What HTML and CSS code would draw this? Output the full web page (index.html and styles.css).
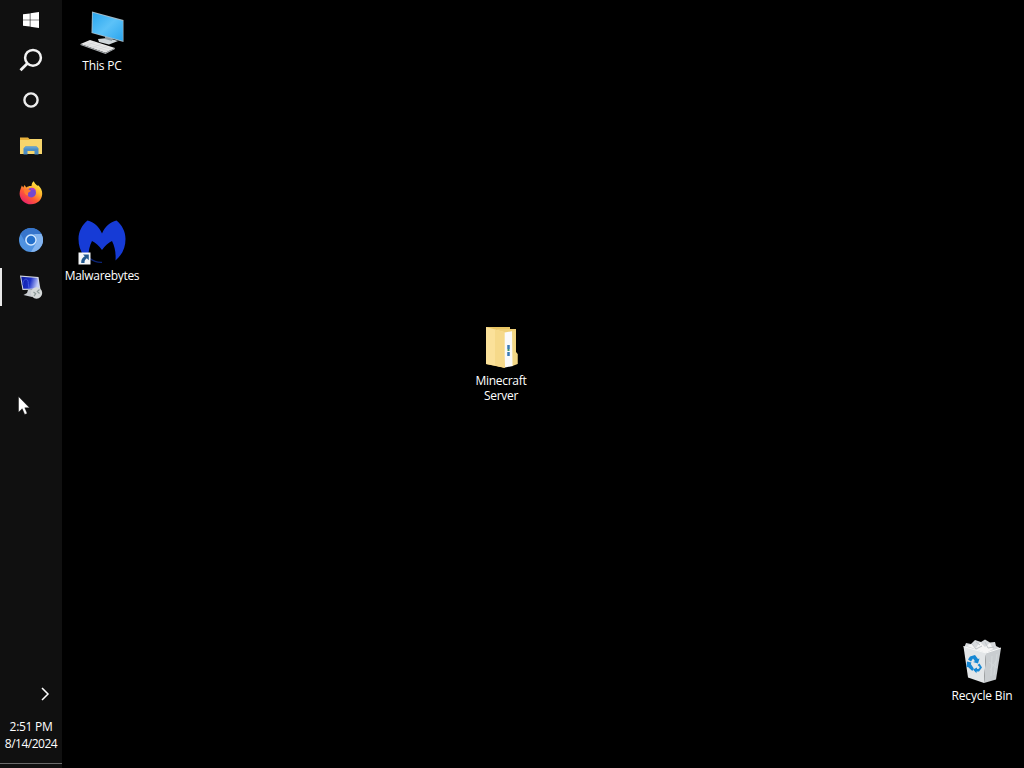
FILE: index.html
```
<!DOCTYPE html>
<html lang="en">
<head>
    <meta charset="utf-8">
    <title>Desktop</title>
    <meta name="viewport" content="width=device-width, initial-scale=1.0">
    <link rel="stylesheet" href="styles.css">
</head>
<body>
    <nav class="taskbar">
        <div class="system-buttons">
            <a class="task-button">
                <svg width="16" height="16" viewBox="0 0 16 16" fill="#fff">
                    <path d="M0 2.3l6.800-.9v6.300H0zM7.400 1.200L16 0v7.700H7.400zM0 8.300h6.800v6.300L0 13.700zM7.400 8.300H16V16l-8.600-1.200z"/>
                </svg>
            </a>
            <a class="task-button">
                <svg width="24" height="24" viewBox="0 0 24 24" fill="none" stroke="#f2f2f2" stroke-width="2.500">
                    <circle cx="14" cy="9.800" r="7.900"/>
                    <path d="M8.300 15.500L1.500 22.300" stroke-width="2.800"/>
                </svg>
            </a>
            <a class="task-button">
                <svg width="16" height="16" viewBox="0 0 16 16" fill="none" stroke="#ececec" stroke-width="2.400">
                    <circle cx="8" cy="8" r="6.600"/>
                </svg>
            </a>
        </div>

        <div class="apps">
            <a class="app-button">
                <svg width="24" height="24" viewBox="0 0 24 24">
                    <path d="M1 3.500h8l1.500 1.500H23v15H1z" fill="#e9b23c"/>
                    <path d="M1 6h9l1.500-1H23v15H1z" fill="#f6d56c"/>
                    <path d="M4.500 20.500v-6l2-2h11l2 2v6h-4V17h-7v3.500z" fill="#4a8cc4"/>
                    <path d="M6.500 12.500h11l2 2h-15z" fill="#5f9fd2"/>
                </svg>
            </a>
            <a class="app-button">
                <svg width="24" height="24" viewBox="0 0 24 24">
                    <defs>
                        <linearGradient id="fox" x1=".85" y1=".05" x2=".2" y2=".95">
                            <stop offset="0" stop-color="#fff04a"/>
                            <stop offset=".35" stop-color="#ffb32c"/>
                            <stop offset=".65" stop-color="#ff5a35"/>
                            <stop offset="1" stop-color="#e8206c"/>
                        </linearGradient>
                    </defs>
                    <path d="M12.500 5C12.600 2.800 13.500 1 14.800.2c.6 2 2.200 3.100 3.600 4.600l.8-.5C21.500 6.500 23.500 9.500 23.200 13c-.4 6-5 10.300-11.200 10.300S.7 18.500.6 12.700C.6 9.500 2 7.500 2.800 4.500l1.500 2L5.500 4l1.800 2.500C8.800 5.300 10.500 4.800 12.500 5z" fill="url(#fox)"/>
                    <circle cx="12.300" cy="11.800" r="4.700" fill="#7548cf"/>
                    <path d="M5 9c2-1.500 4.500-1 6 .3l1 .5c-.3 1-2 1.200-2.800 2-.5.800.3 2.100-.2 2.800C6.500 14.500 5 12 5 9z" fill="#ff7c30"/>
                    <path d="M12 6.800c2.500-.5 4.800 1.200 5.200 3.600-1.400-1.500-3.100-2-5.200-1.400z" fill="#b438c7"/>
                </svg>
            </a>
            <a class="app-button">
                <svg width="24" height="24" viewBox="0 0 24 24">
                    <circle cx="12" cy="12" r="12" fill="#4f92e0"/>
                    <path d="M1.600 6A12 12 0 0 1 22.400 6H12a6 6 0 0 0-5.200 9z" fill="#3775cb"/>
                    <path d="M22.400 6A12 12 0 0 1 12 24l5.200-9a6 6 0 0 0-.9-7.200L15 6z" fill="#83b4ef"/>
                    <circle cx="12" cy="12" r="5.800" fill="#d3e8ff"/>
                    <circle cx="12" cy="12" r="4.300" fill="#2470cb"/>
                </svg>
            </a>
            <a class="app-button active">
                <svg width="24" height="24" viewBox="0 0 24 24">
                    <defs>
                        <linearGradient id="rdp" x1="0" y1="0" x2="1" y2=".2">
                            <stop offset="0" stop-color="#0d1c9c"/>
                            <stop offset=".55" stop-color="#1b2fc8"/>
                            <stop offset="1" stop-color="#c3ccfa"/>
                        </linearGradient>
                    </defs>
                    <path d="M1 .5L19.500 2l2 12.500L3.500 15z" fill="#d3d7e2"/>
                    <path d="M2.200 1.700L18.500 3l1.800 10.500-16 .3z" fill="url(#rdp)"/>
                    <path d="M3.800 10c.2-5.500 3.200-7 4.700-5 1.300 2 .5 5 1.500 8.500" fill="none" stroke="#4159dd"/>
                    <path d="M9 15h6v3l-2 4-8.500-2 3.500-2z" fill="#c8ccd0"/>
                    <circle cx="17.500" cy="18" r="5.700" fill="#d5d9d9"/>
                    <path d="M14.500 17l2.200 1.700-1.700 2.500M20.500 14.500l-2.200 2 2.200 2" fill="none" stroke="#8f9c9a" stroke-width="1.200"/>
                </svg>
            </a>
        </div>

        <div class="tray">
            <svg class="chevron" width="10" height="14" viewBox="0 0 10 14" fill="none" stroke="#fff" stroke-width="1.500">
                <path d="M2 1l6 6-6 6"/>
            </svg>
            <div class="clock">
                <div class="time">2:51 PM</div>
                <div class="date">8/14/2024</div>
            </div>
            <div class="show-desktop"></div>
        </div>
    </nav>

    <main class="desktop">
        <div class="shortcut this-pc">
            <svg width="48" height="48" viewBox="0 0 48 48">
                <defs>
                    <linearGradient id="screen" x1="0" y1="0" x2="1" y2="1">
                        <stop offset="0" stop-color="#29a6ee"/>
                        <stop offset=".5" stop-color="#5cc2f8"/>
                        <stop offset="1" stop-color="#2aa5ee"/>
                    </linearGradient>
                </defs>
                <path d="M20 31l10-1 10 3-9 3.500-10-2.500z" fill="#cfd6da"/>
                <path d="M27 26l7 2v5l-7-2z" fill="#8f9a9f"/>
                <path d="M14 3.500l31.500 8.500v22L13.500 25z" fill="#9fb9c8"/>
                <path d="M14.800 4.800l30 8.200v19.800l-30.300-8.400z" fill="url(#screen)"/>
                <path d="M2.500 36l9.500-4 25 8-9.500 4.700z" fill="#e8e8e8"/>
                <path d="M2.500 36l25 8.700 9.500-4.700v1l-9.500 4.900-25-8.800z" fill="#a9adb0"/>
                <path d="M6 36l25 7M9 34.500l25 7M8 38l9-4M14 40l9-4M20 42l9-4" stroke="#cfd2d3" stroke-width=".6"/>
            </svg>
            <span class="label">This PC</span>
        </div>

        <div class="shortcut malwarebytes">
            <svg width="48" height="48" viewBox="0 0 48 48">
                <path d="M9.500 2.500C16 4 21 8.500 24 15.500 27 8.500 32 4 38.500 2.500c5.500 4.500 9 11 9 18.500 0 8.500-3 15.500-10 21.500.500-7-.500-13.500-3.500-19.500-3.500 1.500-7 5-10 9-3-4-6.500-7.500-10-9-3 6-4 12.500-3.500 19.500C3.500 36.500.5 29.500.5 21 .5 13.500 4 7 9.500 2.500z" fill="#163bd6"/>
                <path d="M12 40.500c3 2.500 7 4 12 3.800" fill="none" stroke="#0b2477" stroke-width="1.300"/>
                <path d="M.5 34.500h12v12H.5z" fill="#f5f7f9"/>
                <path d="M5 36.500h5.800v5.800l-2-2c-1.700 1.200-2.400 2.500-2.300 4.700H3.200c-.2-3 1-5.200 3.600-6.700z" fill="#22598f"/>
            </svg>
            <span class="label">Malwarebytes</span>
        </div>

        <div class="shortcut minecraft">
            <svg width="48" height="48" viewBox="0 0 48 48">
                <path d="M9 4h24v25h-5v16L9 41z" fill="#e9c564"/>
                <path d="M20 6h19v23l1.500 2v10L29 42z" fill="#f0d078"/>
                <path d="M25 10l11-2v35l-8 1.500z" fill="#fafafa"/>
                <path d="M35 8l3.500-.5V29l2 2v10l-5 2z" fill="#f1d685"/>
                <path d="M31.500 22v4M31.500 29v4" stroke="#397ab5" stroke-width="2.500"/>
                <path d="M31.500 26v2" stroke="#3f9368" stroke-width="2"/>
                <path d="M9 4l18.500 5v35.500L9 41z" fill="#fbe19a"/>
                <path d="M18 6.500l9.500 2.700v35.500L18 42.500z" fill="#f6d98a"/>
            </svg>
            <span class="label">Minecraft Server</span>
        </div>

        <div class="shortcut recycle-bin">
            <svg width="48" height="48" viewBox="0 0 48 48">
                <path d="M6 10l2-5 5 1 4-4 6 2 4-2.500 5 3 5-.5 1 4 4 2-4 5-14 3z" fill="#d7dadd"/>
                <path d="M9 8l5-2 4 4 4-6 5 5 5-4 3 6-7 4z" fill="#f6f6f6"/>
                <path d="M14 6l4 5 6-3M27 4l3 6 6-1M18 4l4 3" fill="none" stroke="#c0c5c8"/>
                <path d="M5.500 8.500L28 15l-2 30-16-5.500z" fill="#e3e6e8"/>
                <path d="M28 15l15-5-5 31.500L26 45z" fill="#c9cdd0"/>
                <path d="M5.500 8.500L28 15l15-5" fill="none" stroke="#f7f8f8"/>
                <path d="M34 18l-1 20M39 16l-3 21M31 24l8 6M32 32l6-9" stroke="#d6dadc" stroke-width=".8"/>
                <g fill="#1688d4">
                    <path d="M12 18.500l5-1.500 3 4 1.500-.5-1.500 5-5-1.500 2-.8-2-2.700-2 3-3-2z"/>
                    <path d="M9 23.500l4.500 1-.7 1.500 3 4.500-1.500 2.500-4.300-4-1.500.3z"/>
                    <path d="M21.500 25.500l2.500 4-3 4h-2.500v1.800L15 31.500l4-2v1.500l2-.3.700-1.700-2.200-2z"/>
                </g>
            </svg>
            <span class="label">Recycle Bin</span>
        </div>
    </main>

    <svg class="cursor" width="12" height="19" viewBox="0 0 12 19">
        <path d="M.5.500v15.800l3.700-3.600 2.500 5.800 2.500-1.100-2.400-5.600h4.700z" fill="#fff" stroke="#000" stroke-width=".4"/>
    </svg>
</body>
</html>
```
FILE: styles.css
```
body {
    margin: 0;
    height: 100vh;
    display: flex;
    overflow: hidden;
    background: #000;
    color: #fff;
    font-family: "Open Sans", "Noto Sans", sans-serif;
    font-size: 12px;
}

svg {
    display: block;
}

.taskbar {
    width: 62px;
    height: 100%;
    display: flex;
    flex-direction: column;
    background: #101010;
}

.task-button,
.app-button {
    display: flex;
    align-items: center;
    justify-content: center;
    height: 40px;
}

.apps {
    padding-top: 2px;
}

.app-button {
    height: 47px;
    box-sizing: border-box;
}

.app-button.active {
    background: linear-gradient(#e8e8e8, #e8e8e8) 0 5px / 2px 38px no-repeat;
}

.tray {
    margin-top: auto;
}

.chevron {
    margin: 0 0 17px 40px;
}

.clock {
    text-align: center;
    line-height: 17px;
    letter-spacing: -0.5px;
    white-space: nowrap;
}

.time {
    letter-spacing: -0.3px;
}

.show-desktop {
    height: 4px;
    margin-top: 11px;
    border-top: 1px solid #6b6b6b;
}

.desktop {
    flex: 1;
}

/* icons are placed freely on the desktop */
.shortcut {
    position: absolute;
    width: 76px;
    display: flex;
    flex-direction: column;
    align-items: center;
}

.label {
    margin-top: 2px;
    line-height: 15px;
    text-align: center;
    letter-spacing: -0.3px;
}

.this-pc {
    left: 64px;
    top: 8px;
}

.malwarebytes {
    left: 64px;
    top: 218px;
}

.minecraft {
    left: 463px;
    top: 323px;
}

.recycle-bin {
    left: 944px;
    top: 638px;
}

.this-pc .label,
.recycle-bin .label {
    letter-spacing: -0.15px;
}

.cursor {
    position: absolute;
    left: 18px;
    top: 396px;
}
```
